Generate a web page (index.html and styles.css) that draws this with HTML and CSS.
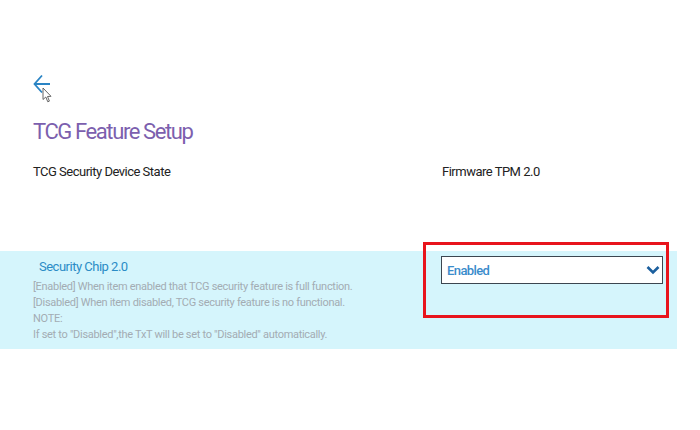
FILE: index.html
```html
<!DOCTYPE html>
<html lang="en">
<head>
  <meta charset="UTF-8">
  <title>TCG Feature Setup</title>
  <link rel="stylesheet" href="styles.css">
</head>
<body>

  <!-- Header -->
  <div class="header">
    <div class="back">
      <svg width="18" height="20" viewBox="0 0 18 20">
        <path d="M9 1.5 L1.5 10 L9 18.5 M1.5 10 L17 10" fill="none" stroke="#2a84c4" stroke-width="1.8"/>
      </svg>
      <svg class="cursor" width="10" height="16" viewBox="0 0 10 16">
        <path d="M1 1 L1 12.5 L3.8 10 L5.8 14.8 L7.4 14.1 L5.5 9.5 L9 9.3 Z" fill="#fff" stroke="#555" stroke-width="0.9"/>
      </svg>
    </div>
    <h1 class="title">TCG Feature Setup</h1>
  </div>

  <!-- Info row -->
  <div class="row">
    <div class="label">TCG Security Device State</div>
    <div class="value">Firmware TPM 2.0</div>
  </div>

  <!-- Selected option -->
  <div class="option">
    <div class="option-info">
      <div class="option-name">Security Chip 2.0</div>
      <div class="help">
        [Enabled] When item enabled that TCG security feature is full function.<br>
        [Disabled] When item disabled, TCG security feature is no functional.<br>
        NOTE:<br>
        If set to "Disabled",the TxT will be set to "Disabled" automatically.
      </div>
    </div>
    <div class="highlight">
      <div class="select">
        <span>Enabled</span>
        <svg width="14" height="10" viewBox="0 0 14 10">
          <path d="M1.5 2 L7 7.5 L12.5 2" fill="none" stroke="#1b5f9e" stroke-width="2.6"/>
        </svg>
      </div>
    </div>
  </div>

</body>
</html>
```

FILE: styles.css
```css
body {
  margin: 0;
  background-color: #fff;
  font-family: Roboto, sans-serif;
  width: 700px;
  height: 430px;
  overflow: hidden;
}

.header {
  padding: 74px 0 0 33px;
}

.back {
  position: relative;
  width: 18px;
  height: 20px;
}

.back .cursor {
  position: absolute;
  left: 9px;
  top: 13px;
}

.title {
  margin: 24px 0 0;
  font-size: 22px;
  font-weight: normal;
  letter-spacing: -1.4px;
  color: #7c5fae;
  line-height: 28px;
}

.row {
  display: grid;
  grid-template-columns: 409px auto;
  padding: 17px 0 0 33px;
  font-size: 13px;
  letter-spacing: -0.5px;
  color: #222;
  line-height: 18px;
}

.option {
  display: grid;
  grid-template-columns: 423px 246px;
  width: 677px;
  height: 98px;
  margin-top: 70px;
  background-color: #d5f5fc;
}

.option-info {
  padding: 7px 0 0 33px;
}

.option-name {
  padding-left: 6px;
  font-size: 13px;
  letter-spacing: -0.5px;
  color: #2b8cc6;
  line-height: 18px;
}

.help {
  margin-top: 3px;
  font-size: 11px;
  letter-spacing: -0.3px;
  color: #a3acb3;
  line-height: 16px;
}

.highlight {
  margin-top: -9px;
  height: 76px;
  border: 3px solid #e8141c;
  box-sizing: border-box;
  padding: 11px 3px 0 15px;
}

.select {
  display: flex;
  align-items: center;
  justify-content: space-between;
  height: 28px;
  box-sizing: border-box;
  border: 1px solid #3c4650;
  background-color: #fff;
  padding: 0 2px 0 5px;
  font-size: 13px;
  font-weight: 500;
  letter-spacing: -0.6px;
  color: #3a8ccb;
}
```
